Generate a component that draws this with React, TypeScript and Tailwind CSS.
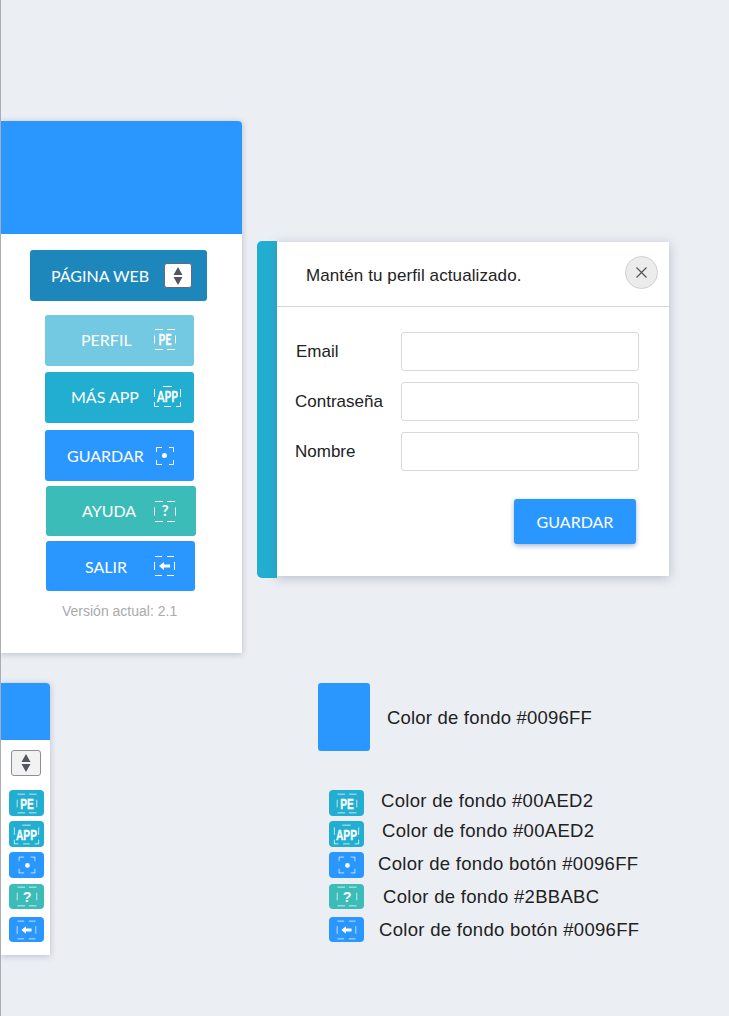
type IconKind = 'pe' | 'app' | 'dot' | 'help' | 'exit';

const frameSizes: Record<IconKind, [number, number]> = {
    pe: [22, 21],
    app: [27, 21],
    dot: [18, 18],
    help: [22, 21],
    exit: [21, 20],
};

const DashFrame = ({ w, h }: { w: number; h: number }) => {
    const seg = Math.round((w - 5) / 2);
    return (
        <svg width={w} height={h} className="absolute left-0 top-0" fill="none" stroke="white" strokeWidth="1">
            <path d={`M1 .5H${seg} M${w - seg} .5H${w - 1} M1 ${h - 0.5}H${seg} M${w - seg} ${h - 0.5}H${w - 1}`} />
            <path d={`M.5 ${h / 2 - 4}V${h / 2 + 4} M${w - 0.5} ${h / 2 - 4}V${h / 2 + 4}`} />
        </svg>
    );
};

const AppFrame = () => (
    <svg width="27" height="21" className="absolute left-0 top-0" fill="none" stroke="white" strokeWidth="1">
        <path d="M9 .5H18 M.5 3V11 M26.5 3V11 M.5 16V20.5H5 M10 20.5H17 M22 20.5H26.5V16" />
    </svg>
);

const CornerFrame = ({ w, h }: { w: number; h: number }) => (
    <svg width={w} height={h} className="absolute left-0 top-0" fill="none" stroke="white" strokeWidth="1">
        <path d={`M.5 5V.5H6 M${w - 5} .5H${w - 0.5}V5 M.5 ${h - 5}V${h - 0.5}H6 M${w - 5} ${h - 0.5}H${w - 0.5}V${h - 5}`} />
    </svg>
);

const FrameIcon = ({ kind }: { kind: IconKind }) => {
    const [w, h] = frameSizes[kind];
    return (
        <span className="relative flex items-center justify-center shrink-0" style={{ width: w, height: h }}>
            {kind === 'dot' ? <CornerFrame w={w} h={h} /> : kind === 'app' ? <AppFrame /> : <DashFrame w={w} h={h} />}
            {kind === 'pe' && <span className="inline-block scale-x-[0.72] text-[15px] leading-none font-bold text-white [-webkit-text-stroke:0.3px_white]">PE</span>}
            {kind === 'app' && <span className="inline-block scale-x-[0.72] text-[15px] leading-none font-bold text-white [-webkit-text-stroke:0.3px_white]">APP</span>}
            {kind === 'help' && <span className="text-[15px] leading-none font-bold text-white -mt-px">?</span>}
            {kind === 'dot' && <span className="w-[5px] h-[5px] rounded-full bg-white" />}
            {kind === 'exit' && (
                <svg width="11" height="8" viewBox="0 0 11 8" fill="white">
                    <path d="M0 4 5 0v2.500h6v3H5V8z" />
                </svg>
            )}
        </span>
    );
};

const UpDown = () => (
    <svg width="10" height="18" viewBox="0 0 10 18" fill="#54565e">
        <path d="M5 0l4.500 8h-9zM5 18l-4.500-8h9z" />
    </svg>
);

const MenuButton = ({ label, kind, className, labelClass = '' }: { label: string; kind: IconKind; className: string; labelClass?: string }) => (
    <div className={`flex items-center rounded-[3px] text-white text-[16px] font-['Lato',sans-serif] ${className}`}>
        <span className={`whitespace-nowrap ${labelClass}`}>{label}</span>
        <FrameIcon kind={kind} />
    </div>
);

const Chip = ({ kind, className }: { kind: IconKind; className: string }) => (
    <div className={`w-[35px] shrink-0 flex items-center justify-center rounded-[4px] ${className}`}>
        <div className="scale-[0.95]">
            <FrameIcon kind={kind} />
        </div>
    </div>
);

const FormRow = ({ label, labelClass }: { label: string; labelClass: string }) => (
    <div className="flex items-center h-[39px]">
        <span className={`text-[17px] text-[#222] ${labelClass}`}>{label}</span>
        <div className="w-[238px] h-[39px] bg-white border border-[#d9d9d9] rounded-[3px] ml-auto" />
    </div>
);

const chips: { kind: IconKind; className: string }[] = [
    { kind: 'pe', className: 'h-[26px] bg-[#22aed1]' },
    { kind: 'app', className: 'h-[26px] mt-[5px] bg-[#22aed1]' },
    { kind: 'dot', className: 'h-[26px] mt-[5px] bg-[#2997ff]' },
    { kind: 'help', className: 'h-[25px] mt-[6px] bg-[#3bbcb9]' },
    { kind: 'exit', className: 'h-[25px] mt-[8px] bg-[#2997ff]' },
];

const legend = [
    { text: 'Color de fondo #00AED2', row: 'h-[26px]', className: 'ml-[17px] mt-[1px]' },
    { text: 'Color de fondo #00AED2', row: 'h-[31px]', className: 'ml-[18px] mt-[5px]' },
    { text: 'Color de fondo botón #0096FF', row: 'h-[31px]', className: 'ml-[14px] mt-[7px]' },
    { text: 'Color de fondo #2BBABC', row: 'h-[31px]', className: 'ml-[19px] mt-[9px]' },
    { text: 'Color de fondo botón #0096FF', row: 'h-[33px]', className: 'ml-[15px] mt-[11px]' },
];

const App = () => {
    return (
        <div className="w-[729px] h-[1016px] overflow-hidden bg-[#ebeef3] border-l border-[#a9adb6] font-['Liberation_Sans',sans-serif]">
            {/* Sidebar + modal */}
            <div className="flex items-start pt-[121px]">
                <div className="w-[241px] h-[532px] bg-white rounded-tr-[4px] shadow-[0_1px_6px_rgba(90,100,120,0.35)]">
                    <div className="h-[113px] bg-[#2997ff] rounded-tr-[4px]" />
                    <div className="w-[177px] h-[51px] ml-[29px] mt-[16px] pl-[21px] flex items-center rounded-[3px] bg-[#1d86ba] text-white text-[16px] font-['Lato',sans-serif]">
                        <span>PÁGINA WEB</span>
                        <div className="w-[28px] h-[25px] ml-auto mr-[15px] flex items-center justify-center bg-white rounded-[3px] border border-[#5f6b80]">
                            <UpDown />
                        </div>
                    </div>
                    <MenuButton label="PERFIL" kind="pe" className="w-[149px] h-[51px] ml-[44px] mt-[14px] pl-[36px] pb-[2px] gap-[22px] bg-[#72c9e1]" />
                    <MenuButton label="MÁS APP" kind="app" className="w-[149px] h-[51px] ml-[44px] mt-[6px] pl-[26px] pb-[2px] gap-[15px] bg-[#22aed1]" />
                    <MenuButton label="GUARDAR" kind="dot" className="w-[149px] h-[51px] ml-[44px] mt-[7px] pl-[22px] gap-[12px] bg-[#2997ff]" />
                    <MenuButton label="AYUDA" kind="help" className="w-[150px] h-[50px] ml-[45px] mt-[5px] pl-[36px] gap-[18px] bg-[#3bbcb9]" />
                    <MenuButton label="SALIR" kind="exit" labelClass="pt-[2px]" className="w-[149px] h-[50px] ml-[45px] mt-[5px] pl-[39px] gap-[27px] bg-[#2997ff]" />
                    <p className="mt-[11px] ml-[61px] text-[14px] leading-[18px] text-[#aaa]">Versión actual: 2.1</p>
                </div>

                <div className="flex ml-[15px] mt-[120px] h-[337px] items-start">
                    <div className="w-[20px] h-[337px] bg-[#22aed1] rounded-l-[5px]" />
                    <div className="w-[392px] h-[334px] mt-[1px] bg-white shadow-[0_2px_10px_rgba(90,100,120,0.35)]">
                        <div className="h-[65px] flex items-center pl-[29px] pr-[11px] border-b border-[#d2d4d8]">
                            <span className="mt-[4px] text-[17px] tracking-[0.1px] text-[#222]">Mantén tu perfil actualizado.</span>
                            <button className="w-[33px] h-[33px] ml-auto -mt-[3px] flex items-center justify-center rounded-full bg-[#ececec] border border-[#cfcfcf]">
                                <svg width="11" height="11" viewBox="0 0 11 11" stroke="#555" strokeWidth="1.2">
                                    <path d="M.5.5l10 10M10.5.5l-10 10" />
                                </svg>
                            </button>
                        </div>
                        <div className="flex flex-col gap-[11px] pt-[25px] pl-[18px] pr-[30px]">
                            <FormRow label="Email" labelClass="ml-px" />
                            <FormRow label="Contraseña" labelClass="" />
                            <FormRow label="Nombre" labelClass="" />
                        </div>
                        <div className="w-[122px] h-[45px] ml-[237px] mt-[28px] flex items-center justify-center rounded-[3px] bg-[#2997ff] text-white text-[16px] font-['Lato',sans-serif] shadow-[0_2px_5px_rgba(40,80,140,0.4)]">
                            GUARDAR
                        </div>
                    </div>
                </div>
            </div>

            {/* Collapsed sidebar + colour legend */}
            <div className="flex items-start mt-[30px]">
                <div className="w-[49px] h-[272px] bg-white rounded-tr-[4px] shadow-[0_1px_6px_rgba(90,100,120,0.35)]">
                    <div className="h-[57px] bg-[#2997ff] rounded-tr-[4px]" />
                    <div className="w-[30px] h-[26px] ml-[10px] mt-[10px] flex items-center justify-center bg-[#f2f2f2] rounded-[3px] border border-[#8c8f96]">
                        <UpDown />
                    </div>
                    <div className="ml-[8px] mt-[14px]">
                        {chips.map((c) => (
                            <Chip key={c.kind} kind={c.kind} className={c.className} />
                        ))}
                    </div>
                </div>

                <div className="ml-[268px]">
                    <div className="flex items-center h-[68px]">
                        <div className="w-[52px] h-[68px] rounded-[3px] bg-[#2997ff]" />
                        <span className="ml-[17px] mt-[2px] text-[18.5px] tracking-[0.2px] text-[#222] whitespace-nowrap">Color de fondo #0096FF</span>
                    </div>
                    <div className="ml-[11px] mt-[39px]">
                        {chips.map((c, i) => (
                            <div key={c.kind} className={`flex items-start ${legend[i].row}`}>
                                <Chip kind={c.kind} className={c.className} />
                                <span className={`text-[18.5px] leading-[20px] tracking-[0.3px] text-[#222] whitespace-nowrap ${legend[i].className}`}>{legend[i].text}</span>
                            </div>
                        ))}
                    </div>
                </div>
            </div>
        </div>
    );
};

export default App;
